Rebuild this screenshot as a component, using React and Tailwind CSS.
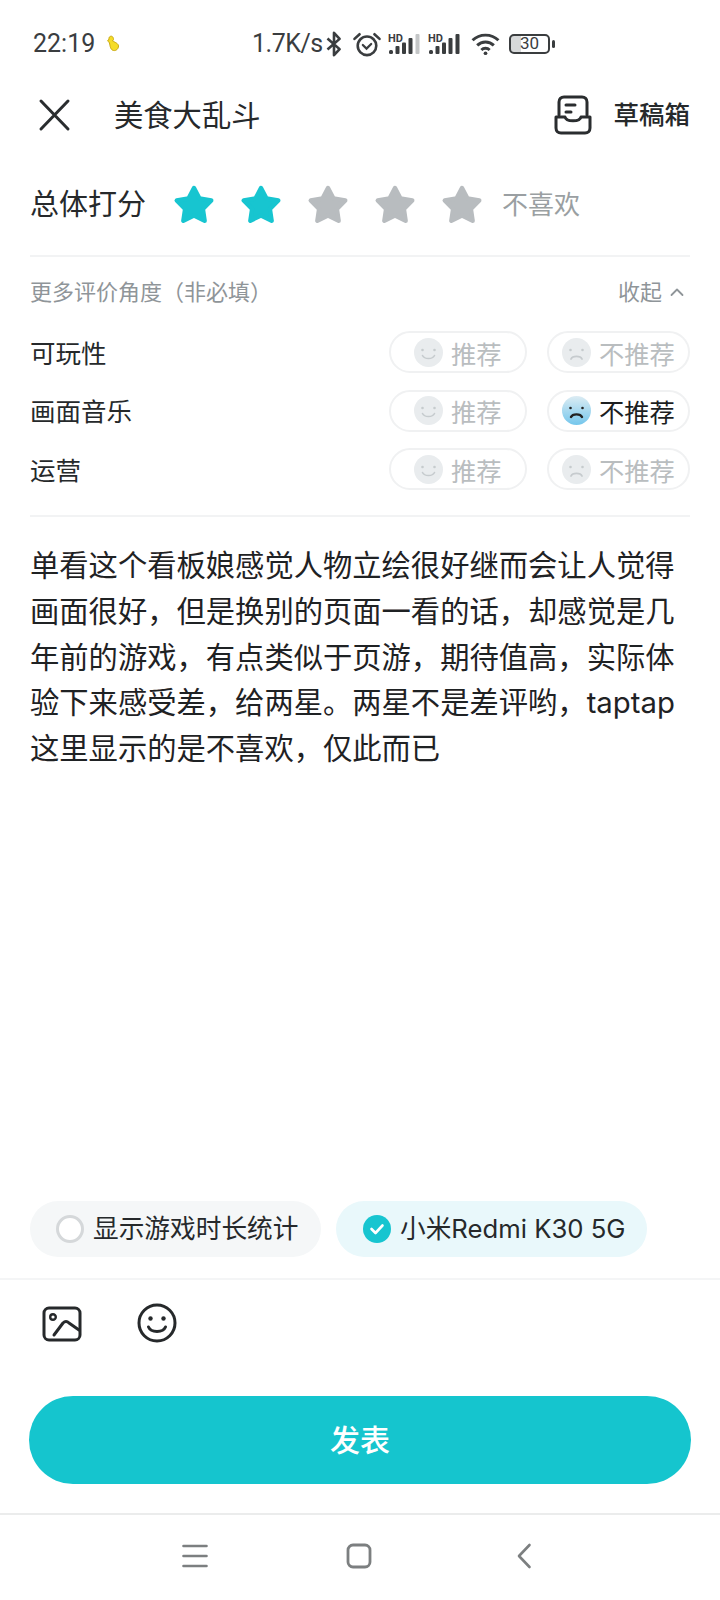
const CJK = { fontFamily: '"Inter","Noto Sans CJK SC",sans-serif' };

function Star({ on }) {
  const c = on ? '#17c5d0' : '#b8bcbf';
  return (
    <svg width="44" height="44" viewBox="0 0 40 40">
      <path d="M20 4.5L25 14.1L35.7 15.9L28.1 23.6L29.7 34.3L20 29.5L10.3 34.3L11.9 23.6L4.3 15.9L15 14.1Z" fill={c} stroke={c} strokeWidth="4" strokeLinejoin="round" />
    </svg>
  );
}

function Face({ sad, active }) {
  const stroke = active ? '#222' : '#c6cbce';
  return (
    <svg width="29" height="29" viewBox="0 0 29 29" className="shrink-0">
      <defs>
        <linearGradient id="sadg" x1="0" y1="0" x2="0" y2="1">
          <stop offset="0" stopColor="#dcecf3" />
          <stop offset="1" stopColor="#74c6ec" />
        </linearGradient>
      </defs>
      <circle cx="14.5" cy="14.5" r="14.5" fill={active ? 'url(#sadg)' : '#e9ecee'} />
      <circle cx="8.5" cy="12" r="1.3" fill={stroke} />
      <circle cx="20.5" cy="12" r="1.3" fill={stroke} />
      {sad ? (
        <path d="M9 21C10.5 17.5 18.5 17.5 20 21" fill="none" stroke={stroke} strokeWidth={active ? 2.4 : 1.8} strokeLinecap="round" />
      ) : (
        <path d="M8.5 17.5C10.5 21.5 18.5 21.5 20.5 17.5" fill="none" stroke={stroke} strokeWidth="1.6" strokeLinecap="round" />
      )}
    </svg>
  );
}

function Row({ label, active }) {
  return (
    <div className="flex items-center h-[42px]">
      <div className="flex-1 text-[25.5px] text-[#26292b] pt-[4px]">{label}</div>
      <div className="w-[138px] h-[42px] rounded-full border-2 border-[#f0f1f2] flex items-center pl-[23px] gap-[8px] text-[25.3px] text-[#b9bdbf]">
        <Face />
        <span className="pt-[5px]">推荐</span>
      </div>
      <div className={`ml-[20px] w-[143px] h-[42px] rounded-full border-2 border-[#f0f1f2] flex items-center pl-[13px] gap-[8px] text-[25.3px] ${active ? 'text-[#1c1e1f]' : 'text-[#b9bdbf]'}`}>
        <Face sad active={active} />
        <span className="pt-[5px]">不推荐</span>
      </div>
    </div>
  );
}

function Signal({ dim }) {
  return (
    <svg width="32" height="22" viewBox="0 0 32 22" className="shrink-0">
      <text x="0" y="8.5" fontSize="11" fontWeight="700" fill="#3a3d3f" fontFamily="Roboto,sans-serif">HD</text>
      <rect x="1" y="17" width="4" height="4" rx="1.5" fill="#3a3d3f" />
      <rect x="7.5" y="13" width="4" height="8" rx="1" fill="#3a3d3f" />
      <rect x="14" y="9.5" width="4" height="11.5" rx="1" fill="#3a3d3f" />
      <rect x="20.5" y="5" width="4" height="16" rx="1" fill="#3a3d3f" />
      <rect x="27.5" y="1" width="4" height="20" rx="1" fill={dim ? '#c4c6c7' : '#3a3d3f'} />
    </svg>
  );
}

export default function App() {
  return (
    <div className="w-[720px] h-[1600px] bg-white flex flex-col overflow-hidden" style={CJK}>
      {/* status bar */}
      <div className="h-[84px] shrink-0 flex items-center pl-[33px] pt-[3px] text-[#3a3d3f]">
        <span className="text-[25px] w-[73px]" style={{ fontFamily: 'Roboto,sans-serif' }}>22:19</span>
        <svg width="14" height="18" viewBox="0 0 14 18">
          <path d="M4 1.5C6 0.5 7.5 2 7.5 4.5L6.5 6C8.5 7 12.5 8.5 12.5 11C12.5 14 10 16 7.5 15.5C4.5 15 4 11 3.5 8C2.8 6.5 1 6 2 5L3 4.5C2.8 3.5 3 2 4 1.5Z" fill="#f5dc28" stroke="#c9a90f" strokeWidth="1" />
        </svg>
        <span className="ml-[132px] text-[25px] tracking-[-0.5px] w-[73px]" style={{ fontFamily: 'Roboto,sans-serif' }}>1.7K/s</span>
        <svg width="20" height="28" viewBox="0 0 20 30" className="shrink-0 ml-[-1px]" fill="none" stroke="#3a3d3f" strokeWidth="2.8" strokeLinejoin="round">
          <path d="M3 9L16 20.5L10 27V3L16 9.5L3 21" />
        </svg>
        <svg width="30" height="26" viewBox="0 0 32 28" className="shrink-0 ml-[8px]" fill="none" stroke="#3a3d3f" strokeWidth="2.8" strokeLinecap="round">
          <circle cx="16" cy="16" r="10" />
          <path d="M11.5 15L15.5 19L20.5 14" strokeWidth="2.4" />
          <path d="M2.5 8.5L8 3.5M29.5 8.5L24 3.5" />
        </svg>
        <div className="ml-[6px] flex gap-[8px]">
          <Signal dim />
          <Signal />
        </div>
        <svg width="31" height="24" viewBox="0 0 32 26" className="shrink-0 ml-[10px]" fill="none" stroke="#3a3d3f" strokeWidth="3.2">
          <path d="M2 9C9.5 1.5 22.5 1.5 30 9" />
          <path d="M7 14.5C12 9.5 20 9.5 25 14.5" />
          <path d="M11.5 19.5C14 17 18 17 20.5 19.5" />
          <circle cx="16" cy="23" r="2" fill="#3a3d3f" stroke="none" />
        </svg>
        <div className="ml-[8px] w-[41px] h-[20px] rounded-[5px] border-2 border-[#3a3d3f] flex items-center justify-center text-[17px] leading-none" style={{ background: 'linear-gradient(90deg,#d7d9da 0 28%,#fff 28%)', fontFamily: 'Roboto,sans-serif' }}>30</div>
        <div className="ml-[2px] w-[3px] h-[8px] rounded-full bg-[#3a3d3f]" />
      </div>

      {/* header */}
      <div className="h-[64px] shrink-0 flex items-center px-[30px]">
        <svg width="48" height="48" viewBox="0 0 48 48" className="mt-[-2px]" fill="none" stroke="#2a2d2f" strokeWidth="3" strokeLinecap="round">
          <path d="M11 10L38 38M38 10L11 38" />
        </svg>
        <span className="ml-[36px] text-[29.3px] text-[#26292b] flex-1">美食大乱斗</span>
        <svg width="38" height="40" viewBox="0 0 38 40" className="mt-[-3px] mr-[2px]" fill="none" stroke="#2a2d2f" strokeWidth="3" strokeLinecap="round" strokeLinejoin="round">
          <path d="M5 20V7C5 4 7 2 10 2H28C31 2 33 4 33 7V20" />
          <path d="M12 10H21M12 17H17" />
          <path d="M2 22H11C12 27 26 27 27 22H36V33C36 36 34 38 31 38H7C4 38 2 36 2 33Z" />
        </svg>
        <span className="ml-[19px] text-[25.5px] font-medium text-[#26292b] mt-[-2px]">草稿箱</span>
      </div>

      {/* rating */}
      <div className="mx-[30px] h-[109px] pt-[6px] shrink-0 flex items-center border-b-2 border-[#f2f3f4]">
        <span className="text-[29px] text-[#26292b] w-[142px]">总体打分</span>
        <div className="flex gap-[23px]">
          <Star on />
          <Star on />
          <Star />
          <Star />
          <Star />
        </div>
        <span className="ml-[18px] text-[26px] text-[#9a9fa2]">不喜欢</span>
      </div>

      {/* more */}
      <div className="mx-[30px] h-[74px] shrink-0 flex items-center justify-between pb-[4px]">
        <span className="text-[22px] text-[#8f9599]">更多评价角度（非必填）</span>
        <span className="flex items-center text-[22px] text-[#8f9599]">
          收起
          <svg width="14" height="10" viewBox="0 0 14 10" className="ml-[8px] mr-[6px]" fill="none" stroke="#8f9599" strokeWidth="1.8" strokeLinecap="round" strokeLinejoin="round">
            <path d="M1.5 8L7 2.5L12.5 8" />
          </svg>
        </span>
      </div>

      <div className="mx-[30px] shrink-0 flex flex-col gap-[16.5px]">
        <Row label="可玩性" />
        <Row label="画面音乐" active />
        <Row label="运营" />
      </div>

      <div className="mx-[30px] mt-[25px] shrink-0 border-b-2 border-[#f2f3f4]" />

      {/* body */}
      <div className="flex-1 mx-[30px] pt-[26px] text-[29.3px] leading-[45.8px] text-[#1f2224]">
        单看这个看板娘感觉人物立绘很好继而会让人觉得画面很好，但是换别的页面一看的话，却感觉是几年前的游戏，有点类似于页游，期待值高，实际体验下来感受差，给两星。两星不是差评哟，taptap这里显示的是不喜欢，仅此而已
      </div>

      {/* chips */}
      <div className="shrink-0 ml-[30px] flex gap-[15px]">
        <div className="h-[56px] w-[291px] rounded-full bg-[#f5f7f8] flex items-center pl-[26px] gap-[9px] text-[25.7px] text-[#26292b]">
          <span className="w-[28px] h-[28px] rounded-full border-[3px] border-[#d5d8da] bg-white" />
          显示游戏时长统计
        </div>
        <div className="h-[56px] w-[311px] rounded-full bg-[#e9f8fb] flex items-center pl-[27px] gap-[9px] text-[25.7px] text-[#26292b]">
          <svg width="28" height="28" viewBox="0 0 28 28">
            <circle cx="14" cy="14" r="14" fill="#17c5d0" />
            <path d="M8.5 14L12.5 18L19.5 10.5" fill="none" stroke="#fff" strokeWidth="2.6" strokeLinecap="round" strokeLinejoin="round" />
          </svg>
          小米Redmi K30 5G
        </div>
      </div>

      <div className="shrink-0 mt-[21px] border-b-2 border-[#f4f5f6]" />

      {/* tools */}
      <div className="shrink-0 h-[116px] flex items-start pl-[42px] pt-[23px]">
        <svg width="40" height="36" viewBox="0 0 40 36" className="mt-[3px]" fill="none" stroke="#26292b" strokeWidth="3" strokeLinecap="round" strokeLinejoin="round">
          <rect x="2" y="2" width="36" height="32" rx="5" />
          <circle cx="11" cy="11" r="2.8" strokeWidth="2.4" />
          <path d="M12 29L21 17C23 15 25 15 27 17L37 24" />
        </svg>
        <svg width="40" height="40" viewBox="0 0 40 40" className="ml-[55px]" fill="none" stroke="#26292b" strokeWidth="3" strokeLinecap="round">
          <circle cx="20" cy="20" r="18" />
          <circle cx="13.5" cy="15.5" r="2.2" fill="#26292b" stroke="none" />
          <circle cx="26.5" cy="15.5" r="2.2" fill="#26292b" stroke="none" />
          <path d="M11.5 24C14 30 26 30 28.5 24" />
        </svg>
      </div>

      {/* submit */}
      <div className="shrink-0 mx-[29px] h-[88px] rounded-full bg-[#15c5ce] flex items-center justify-center text-[30px] font-medium text-white">
        发表
      </div>

      <div className="shrink-0 mt-[29px] border-b-2 border-[#ebecec]" />

      {/* nav */}
      <div className="shrink-0 h-[85px] flex items-center pl-[182px] pb-[4px]">
        <svg width="26" height="24" viewBox="0 0 26 24" fill="none" stroke="#7c7f80" strokeWidth="2.6" strokeLinecap="round">
          <path d="M1.5 2H24.5M1.5 12H24.5M1.5 22H24.5" />
        </svg>
        <svg width="26" height="26" viewBox="0 0 26 26" className="ml-[138px]" fill="none" stroke="#7c7f80" strokeWidth="2.8">
          <rect x="2" y="2" width="22" height="22" rx="5" />
        </svg>
        <svg width="16" height="26" viewBox="0 0 16 26" className="ml-[144px]" fill="none" stroke="#7c7f80" strokeWidth="2.6" strokeLinecap="round" strokeLinejoin="round">
          <path d="M13.5 2L3 13L13.5 24" />
        </svg>
      </div>
    </div>
  );
}
